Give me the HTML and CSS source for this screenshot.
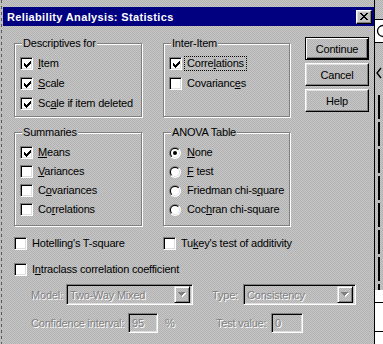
FILE: index.html
```html
<!DOCTYPE html>
<html lang="en">
<head>
    <meta charset="UTF-8">
    <title>Reliability Analysis: Statistics</title>
    <link rel="stylesheet" href="styles.css">
</head>
<body>
<svg class="defs" width="0" height="0">
    <defs>
        <linearGradient id="rOut" x1="0" y1="0" x2="1" y2="1"><stop offset=".5" stop-color="#808080"/><stop offset=".5" stop-color="#fff"/></linearGradient>
        <linearGradient id="rIn" x1="0" y1="0" x2="1" y2="1"><stop offset=".5" stop-color="#000"/><stop offset=".5" stop-color="#dfdfdf"/></linearGradient>
        <symbol id="radio" viewBox="0 0 12 12">
            <circle cx="6" cy="6" r="6" fill="url(#rOut)"/>
            <circle cx="6" cy="6" r="5" fill="url(#rIn)"/>
            <circle cx="6" cy="6" r="4" fill="#fff"/>
        </symbol>
        <symbol id="check" viewBox="0 0 7 7">
            <path d="M0 2h1v1h1v1h1v-1h1v-1h1v-1h1v-1h1v3h-1v1h-1v1h-1v1h-1v1h-1v-1h-1v-1h-1v-3z" fill="#000"/>
        </symbol>
        <symbol id="down" viewBox="0 0 8 5">
            <path d="M1 1h7v1h-1v1h-1v1h-1v1h-1v-1h-1v-1h-1v-1h-1z" fill="#fff"/>
            <path d="M0 0h7v1h-1v1h-1v1h-1v1h-1v-1h-1v-1h-1v-1h-1z" fill="#808080"/>
        </symbol>
    </defs>
</svg>

<div class="screen">
    <div class="dialog">
        <!-- title bar -->
        <div class="titlebar">
            <span class="title">Reliability Analysis: Statistics</span>
            <span class="close">
                <svg width="8" height="7" viewBox="0 0 8 7"><path d="M0 0h2v1h-2z M6 0h2v1h-2z M1 1h2v1h-2z M5 1h2v1h-2z M2 2h4v1h-4z M3 3h2v1h-2z M2 4h4v1h-4z M1 5h2v1h-2z M5 5h2v1h-2z M0 6h2v1h-2z M6 6h2v1h-2z" fill="#000"/></svg>
            </span>
        </div>

        <div class="body">
            <div class="top">
                <fieldset class="group">
                    <legend>Descriptives for</legend>
                    <div class="row"><span class="cb on"><svg><use href="#check"/></svg></span><label><u>I</u>tem</label></div>
                    <div class="row"><span class="cb on"><svg><use href="#check"/></svg></span><label><u>S</u>cale</label></div>
                    <div class="row"><span class="cb on"><svg><use href="#check"/></svg></span><label>Sc<u>a</u>le if item deleted</label></div>
                </fieldset>
                <fieldset class="group">
                    <legend>Inter-Item</legend>
                    <div class="row"><span class="cb on"><svg><use href="#check"/></svg></span><label class="focus">Corre<u>l</u>ations</label></div>
                    <div class="row"><span class="cb"></span><label>Covarianc<u>e</u>s</label></div>
                </fieldset>
                <div class="buttons">
                    <div class="btn default">Continue</div>
                    <div class="btn">Cancel</div>
                    <div class="btn">Help</div>
                </div>
            </div>

            <div class="mid">
                <fieldset class="group tight">
                    <legend>Summaries</legend>
                    <div class="row"><span class="cb on"><svg><use href="#check"/></svg></span><label><u>M</u>eans</label></div>
                    <div class="row"><span class="cb"></span><label><u>V</u>ariances</label></div>
                    <div class="row"><span class="cb"></span><label>C<u>o</u>variances</label></div>
                    <div class="row"><span class="cb"></span><label>Co<u>r</u>relations</label></div>
                </fieldset>
                <fieldset class="group tight">
                    <legend>ANOVA Table</legend>
                    <div class="row"><svg class="rb"><use href="#radio"/><circle cx="6" cy="6" r="2" fill="#000"/></svg><label><u>N</u>one</label></div>
                    <div class="row"><svg class="rb"><use href="#radio"/></svg><label><u>F</u> test</label></div>
                    <div class="row"><svg class="rb"><use href="#radio"/></svg><label>Friedman chi-s<u>q</u>uare</label></div>
                    <div class="row"><svg class="rb"><use href="#radio"/></svg><label>Coc<u>h</u>ran chi-square</label></div>
                </fieldset>
            </div>

            <div class="opts">
                <div class="row"><span class="cb"></span><label>Hotellin<u>g</u>'s T-square</label></div>
                <div class="row"><span class="cb"></span><label>Tu<u>k</u>ey's test of additivity</label></div>
            </div>

            <div class="row icc"><span class="cb"></span><label>I<u>n</u>traclass correlation coefficient</label></div>

            <div class="field-row">
                <span class="dis lbl-model">Model:</span>
                <div class="combo model"><span class="dis">Two-Way Mixed</span><span class="arrow"><svg width="8" height="5"><use href="#down"/></svg></span></div>
                <span class="dis lbl-type">Type:</span>
                <div class="combo type"><span class="dis">Consistency</span><span class="arrow"><svg width="8" height="5"><use href="#down"/></svg></span></div>
            </div>

            <div class="field-row second">
                <span class="dis lbl-conf">Confidence interval:</span>
                <div class="edit conf"><span class="dis">95</span></div>
                <span class="dis pct">%</span>
                <span class="dis lbl-test">Test value:</span>
                <div class="edit test"><span class="dis">0</span></div>
            </div>
        </div>
    </div>

    <!-- window behind the dialog -->
    <div class="behind">
        <div class="bk-top"></div>
        <div class="bk-panel"><svg width="8" height="14" viewBox="0 0 8 14"><circle cx="8" cy="7" r="5.5" fill="none" stroke="#000" stroke-width="1.3"/></svg></div>
        <div class="bk-mid"><svg width="8" height="12" viewBox="0 0 8 12"><path d="M6 1L2 6l4 5" fill="none" stroke="#000" stroke-width="1.4"/></svg></div>
        <div class="bk-bars"></div>
        <div class="bk-list"></div>
    </div>
</div>
</body>
</html>
```

FILE: styles.css
```css
* {
    box-sizing: border-box;
}
:root {
    --dither: repeating-conic-gradient(#c6c6c6 0% 25%, #b2b2b2 0% 50%) 0 0 / 2px 2px fixed;
}
body {
    margin: 0;
    width: 383px;
    height: 344px;
    overflow: hidden;
    background: #fff;
    color: #000;
    font-family: "Liberation Sans", Arial, sans-serif;
    font-size: 11px;
    letter-spacing: -0.2px;
}
.defs {
    position: absolute;
}
.screen {
    display: flex;
    height: 344px;
}

/* dialog frame */
.dialog {
    flex: 0 0 375px;
    height: 344px;
    padding: 7px 0 0 3px;
    border-right: 1px solid #000;
    background: repeating-linear-gradient(#5a5a5a 0 3px, transparent 3px 6px) 1px 0 / 1px 100% no-repeat, var(--dither);
}
.titlebar {
    display: flex;
    align-items: center;
    justify-content: space-between;
    height: 19px;
    padding: 0 2px 0 4px;
    background: #000080;
    color: #fff;
}
.title {
    font-weight: bold;
    letter-spacing: 0.35px;
}
.close {
    display: flex;
    align-items: center;
    justify-content: center;
    width: 16px;
    height: 14px;
    padding: 0 1px 1px 0;
    border: 1px solid;
    border-color: #fff #000 #000 #fff;
    box-shadow: inset -1px -1px #808080, inset 1px 1px #dfdfdf;
    background: #c0c0c0;
}
.close svg {
    display: block;
}

.body {
    padding-left: 11px;
}

/* group boxes */
.top {
    display: grid;
    grid-template-columns: 128px 127px 58px;
    column-gap: 21px;
    margin-top: 11px;
}
.top .buttons {
    margin-left: -6px;
}
.mid {
    display: grid;
    grid-template-columns: 128px 127px;
    column-gap: 21px;
    margin-top: 9px;
}
.group {
    margin: 0;
    min-width: 0;
    padding: 7px 0 6px 5px;
    border: 1px solid #808080;
    box-shadow: 1px 1px 0 #fff, inset 1px 1px 0 #fff;
}
.group.tight {
    padding-bottom: 9px;
}
.group legend {
    margin-left: 2px;
    padding: 0 1px;
    line-height: 13px;
    background: var(--dither);
}

/* checkbox / radio rows */
.row {
    display: flex;
    align-items: center;
    height: 13px;
}
.row + .row {
    margin-top: 7px;
}
.tight .row + .row {
    margin-top: 6px;
}
.row label {
    margin-left: 3px;
    padding: 0 2px;
    line-height: 13px;
    white-space: nowrap;
}
.row label.focus {
    outline: 1px dotted #000;
    outline-offset: 0;
}
.cb {
    flex: none;
    width: 13px;
    height: 13px;
    padding: 2px;
    border: 1px solid;
    border-color: #808080 #fff #fff #808080;
    box-shadow: inset 1px 1px #000, inset -1px -1px #dfdfdf;
    background: #fff;
}
.cb svg {
    display: block;
    width: 7px;
    height: 7px;
    margin: 1px 0 0 1px;
    shape-rendering: crispEdges;
}
.rb {
    flex: none;
    width: 12px;
    height: 12px;
    margin-right: 1px;
}

/* push buttons */
.buttons {
    display: flex;
    flex-direction: column;
    gap: 3px;
}
.btn {
    display: flex;
    align-items: center;
    justify-content: center;
    height: 23px;
    border: 1px solid;
    border-color: #fff #000 #000 #fff;
    box-shadow: inset -1px -1px #808080, inset 1px 1px #dfdfdf;
    background: var(--dither);
}
.btn.default {
    border-color: #000;
    box-shadow: inset 1px 1px #fff, inset -1px -1px #000, inset -2px -2px #808080;
}

/* stand-alone options */
.opts {
    display: grid;
    grid-template-columns: 128px 127px;
    column-gap: 21px;
    margin-top: 11px;
}
.opts .row + .row {
    margin-top: 0;
}
.row.icc {
    margin-top: 13px;
}

/* disabled fields */
.dis {
    color: #808080;
    text-shadow: 1px 1px 0 #fff;
    white-space: nowrap;
}
.field-row {
    display: flex;
    align-items: center;
    margin-top: 8px;
    padding-left: 17px;
}
.lbl-model { width: 35px; }
.lbl-type { width: 31px; margin-left: 19px; }
.lbl-conf { width: 97px; }
.pct { width: 51px; margin-left: 7px; }
.lbl-test { width: 55px; }

.combo,
.edit {
    display: flex;
    align-items: center;
    border: 1px solid;
    border-color: #808080 #fff #fff #808080;
    box-shadow: inset 1px 1px #000, inset -1px -1px #dfdfdf;
    background: var(--dither);
}
.combo {
    height: 21px;
    padding: 2px 2px 2px 3px;
}
.combo .dis {
    flex: 1;
}
.combo.model { width: 127px; }
.combo.type { width: 113px; }
.arrow {
    display: flex;
    align-items: center;
    justify-content: center;
    width: 16px;
    height: 17px;
    border: 1px solid;
    border-color: #dfdfdf #000 #000 #dfdfdf;
    box-shadow: inset 1px 1px #fff, inset -1px -1px #808080;
    background: var(--dither);
}
.arrow svg {
    display: block;
    shape-rendering: crispEdges;
}
.edit {
    height: 20px;
    padding-left: 3px;
}
.edit.conf { width: 30px; }
.edit.test { width: 32px; }

/* what shows of the window behind */
.behind {
    flex: 1;
    display: flex;
    flex-direction: column;
}
.bk-top {
    height: 19px;
    background: var(--dither);
}
.bk-panel {
    height: 24px;
    padding-top: 4px;
    background: #fff;
    border-top: 1px solid #000;
    border-bottom: 1px solid #000;
}
.bk-panel svg,
.bk-mid svg {
    display: block;
}
.bk-mid {
    height: 52px;
    padding-top: 24px;
    background: var(--dither);
}
.bk-bars {
    height: 195px;
    background: repeating-linear-gradient(#000 0 24px, transparent 24px 27px) 3px 0 / 2px 100% no-repeat, var(--dither);
}
.bk-list {
    flex: 1;
    background: linear-gradient(#000, #000) 0 12px / 100% 1px no-repeat, linear-gradient(#000, #000) 0 41px / 100% 1px no-repeat, #fff;
}
```
